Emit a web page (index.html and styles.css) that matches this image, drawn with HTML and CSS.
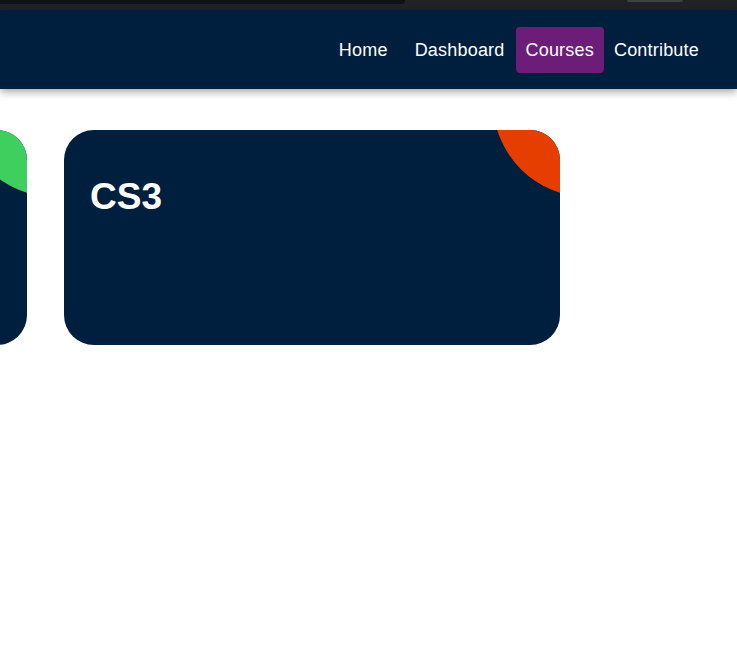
FILE: index.html
```html
<!DOCTYPE html>
<html lang="en">
<head>
<meta charset="utf-8">
<title>Courses</title>
<link rel="stylesheet" href="styles.css">
</head>
<body>
<div class="chrome">
  <div class="tabstrip"></div>
  <div class="pill"></div>
</div>
<nav class="navbar">
  <a class="nav-link nav-home" href="#">Home</a>
  <a class="nav-link nav-dash" href="#">Dashboard</a>
  <a class="nav-link active" href="#">Courses</a>
  <a class="nav-link" href="#">Contribute</a>
</nav>
<main class="cards">
  <div class="card card-green"></div>
  <div class="card card-orange"><h2 class="card-title">CS3</h2></div>
</main>
</body>
</html>
```

FILE: styles.css
```css
* { box-sizing: border-box; }
html, body { margin: 0; padding: 0; background: #ffffff; overflow: hidden; }
body { font-family: "Liberation Sans", Arial, sans-serif; }

.chrome {
  height: 10px;
  background: #202326;
  display: flex;
  align-items: flex-start;
}
.tabstrip {
  width: 405px;
  height: 4px;
  background: #0f1117;
  border-bottom-right-radius: 5px;
}
.pill {
  margin-left: 222px;
  width: 56px;
  height: 2px;
  background: #3d4247;
  border-radius: 0 0 3px 3px;
}

.navbar {
  position: relative;
  z-index: 1;
  height: 79px;
  background: #001f3f;
  display: flex;
  justify-content: flex-end;
  align-items: center;
  padding-right: 28px;
  box-shadow: 0 3px 8px rgba(0, 0, 0, 0.35);
}
.nav-link {
  color: #ffffff;
  text-decoration: none;
  font-size: 18px;
  letter-spacing: 0.2px;
  line-height: 22px;
  padding: 12px 10px;
  border-radius: 4px;
}
.nav-home { margin-right: 7px; }
.nav-dash { margin-right: 1px; }
.nav-link.active { background: #6b1d78; }

.cards {
  display: flex;
  gap: 37px;
  margin-top: 41px;
  margin-left: -469px;
}
.card {
  position: relative;
  flex: 0 0 496px;
  height: 215px;
  background: #001f3f;
  border-radius: 30px;
  overflow: hidden;
  padding: 46px 26px;
}
.card::before {
  content: "";
  position: absolute;
  top: -123px;
  right: -123px;
  width: 190px;
  height: 190px;
  border-radius: 50%;
}
.card-green::before { background: #3ecf5e; }
.card-orange::before { background: #e63e00; }
.card-title {
  position: relative;
  margin: 0;
  color: #ffffff;
  font-size: 37px;
  font-weight: bold;
  line-height: 41px;
}
```
